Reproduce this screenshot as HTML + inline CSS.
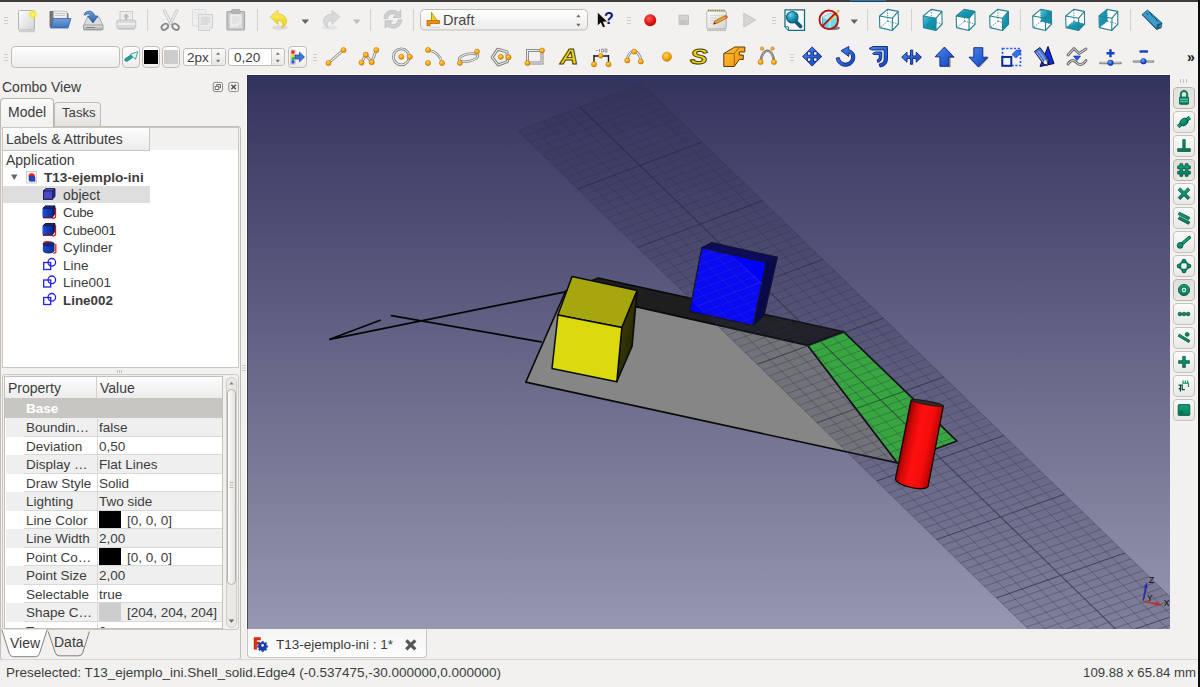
<!DOCTYPE html>
<html>
<head>
<meta charset="utf-8">
<title>FreeCAD</title>
<style>
html,body{margin:0;padding:0;}
body{width:1200px;height:687px;overflow:hidden;background:#f2f1f0;font-family:"Liberation Sans","DejaVu Sans",sans-serif;font-size:13.5px;color:#3c3c3c;position:relative;}
.abs{position:absolute;}
svg{position:absolute;overflow:visible;}
#topbar{left:0;top:0;width:1200px;height:2px;background:#3d3c38;}
#viewport{left:247px;top:75px;width:923px;height:554px;overflow:hidden;}
.t{position:absolute;white-space:nowrap;line-height:16px;}
.b{font-weight:bold;}
.sep{position:absolute;width:1px;background:#d6d3ce;top:9px;height:22px;}
.hdl_unused{position:absolute;width:4px;height:1px;background:#c9c6c1;box-shadow:0 3px 0 #c9c6c1,0 6px 0 #c9c6c1;}
.btn{position:absolute;box-sizing:border-box;border:1px solid #c2beb7;border-radius:4px;background:linear-gradient(#fefefe,#ececea);}
.sbtn{position:absolute;box-sizing:border-box;left:1173px;width:22px;height:22px;border:1px solid #c6c2bb;border-radius:4px;background:linear-gradient(#fbfbfa,#e9e8e6);}
.sbtn.on{background:linear-gradient(#e2e0dd,#eae8e5);border-color:#b9b5ae;}
#tabframe{left:0;top:126px;width:241px;height:534px;border:1px solid #c2beb8;border-radius:0 3px 3px 3px;box-sizing:border-box;background:#f2f1f0;}
#treebox{left:2px;top:127px;width:237px;height:241px;background:#fff;border:1px solid #cbc8c2;box-sizing:border-box;}
#propframe{left:2px;top:374px;width:237px;height:256px;border:1px solid #cbc8c2;border-radius:3px;box-sizing:border-box;}
#treehead{left:3px;top:128px;width:147px;height:23px;background:linear-gradient(#fdfdfd,#ececec);border-right:1px solid #c9c6c1;border-bottom:1px solid #c9c6c1;box-sizing:border-box;}
#treeheadrest{left:150px;top:128px;width:88px;height:22px;background:#f2f1f0;}
#selrow{left:3px;top:186px;width:147px;height:17px;background:#dedede;}
.tab{position:absolute;box-sizing:border-box;border:1px solid #c0bcb5;border-bottom:none;border-radius:4px 4px 0 0;}
#propbox{left:4px;top:376px;width:219px;height:253px;background:#fff;border:1px solid #c4c1bb;box-sizing:border-box;overflow:hidden;}
.prow{position:absolute;left:1px;width:216px;height:18.5px;}
.prow.alt{background:#efefef;}
.prow .k{position:absolute;left:20px;top:1px;line-height:17px;white-space:nowrap;}
.prow .v{position:absolute;left:93px;top:1px;line-height:17px;white-space:nowrap;}
.prow .ln{position:absolute;left:18px;right:0;bottom:0;height:1px;background:#d8d8d8;}
.prow .vl{position:absolute;left:91px;top:0;bottom:0;width:1px;background:#d8d8d8;}
.sw{position:absolute;left:93px;top:0;width:22px;height:17.5px;}
</style>
</head>
<body>
<div id="topbar" class="abs"></div>
<div class="abs" style="left:850px;top:0;width:36px;height:1px;background:#1a7ac8;"></div>
<!-- TOOLBAR 1 -->
<svg width="1200" height="38" style="left:0;top:0" viewBox="0 0 1200 38">
<defs>
<linearGradient id="gpaper" x1="0" y1="0" x2="1" y2="1"><stop offset="0" stop-color="#ffffff"/><stop offset="1" stop-color="#d2d2d2"/></linearGradient>
<radialGradient id="gglow"><stop offset="0" stop-color="#ffffc0"/><stop offset="0.45" stop-color="#f4ea20"/><stop offset="1" stop-color="#f4ea20" stop-opacity="0"/></radialGradient>
<linearGradient id="gfold" x1="0" y1="0" x2="0" y2="1"><stop offset="0" stop-color="#72a2dc"/><stop offset="1" stop-color="#3f73b8"/></linearGradient>
<linearGradient id="gdrv" x1="0" y1="0" x2="0" y2="1"><stop offset="0" stop-color="#e4e4e4"/><stop offset="1" stop-color="#a8a8a8"/></linearGradient>
<linearGradient id="gblu" x1="0" y1="0" x2="0" y2="1"><stop offset="0" stop-color="#6c9ed6"/><stop offset="1" stop-color="#2c5ea0"/></linearGradient>
<linearGradient id="gyel" x1="0" y1="0" x2="0" y2="1"><stop offset="0" stop-color="#fdf27a"/><stop offset="1" stop-color="#e8cc10"/></linearGradient>
<radialGradient id="gred" cx="0.4" cy="0.35" r="0.7"><stop offset="0" stop-color="#ff5a5a"/><stop offset="0.6" stop-color="#e01818"/><stop offset="1" stop-color="#b00c0c"/></radialGradient>
<linearGradient id="gteal" x1="0" y1="0" x2="1" y2="1"><stop offset="0" stop-color="#5cc8ec"/><stop offset="0.45" stop-color="#1596b0"/><stop offset="1" stop-color="#088aa2"/></linearGradient>
<radialGradient id="glens" cx="0.35" cy="0.3" r="0.8"><stop offset="0" stop-color="#6cd0e8"/><stop offset="0.5" stop-color="#1e94b4"/><stop offset="1" stop-color="#0c6c8c"/></radialGradient>
<linearGradient id="gcombo" x1="0" y1="0" x2="0" y2="1"><stop offset="0" stop-color="#ffffff"/><stop offset="1" stop-color="#ebebea"/></linearGradient>
</defs>
<path d="M4 17.5h4M4 20.5h4M4 23.5h4" stroke="#cfcdc9" stroke-width="1"/>
<path d="M19 31.500h16" stroke="#b8b8b8" stroke-width="1.500" opacity="0.6"/><rect x="18.500" y="10.500" width="16" height="19.500" rx="1" fill="url(#gpaper)" stroke="#b4b4b4"/><circle cx="32.800" cy="14.300" r="4.800" fill="url(#gglow)"/>
<path d="M50 11.500h7l1.500 2h9.500v13h-18z" fill="#787878" stroke="#5a5a5a" stroke-width="0.8"/><path d="M53.500 11l13.500 0.500v9h-13.500z" fill="#f0f0f0" stroke="#b0b0b0" stroke-width="0.7"/><path d="M55 13.500h10M55 15.500h10" stroke="#bcbcbc" stroke-width="0.8"/><path d="M53.500 18.500h17.500l-3 9.500h-17.500z" fill="url(#gfold)" stroke="#3465a4" stroke-width="0.8"/>
<path d="M87.500 17h11.500l4 8.500h-19.500z" fill="#dcdcdc" stroke="#9a9a9a" stroke-width="0.8"/><rect x="83.500" y="25" width="19.500" height="5" rx="1" fill="url(#gdrv)" stroke="#8e8e8e" stroke-width="0.8"/><path d="M86 27.500h9" stroke="#888" stroke-width="1"/><path d="M84 14.500c2-4.500 9-5 11 1.500h3l-5 7-5.500-7h3.200c-1-2.600-4.200-2.700-5.200-0.800z" fill="url(#gblu)" stroke="#2a5a9a" stroke-width="0.7"/>
<g opacity="1"><rect x="120" y="11.500" width="12.500" height="10" fill="#ececec" stroke="#c4c4c4" stroke-width="0.8"/><path d="M126.200 13.500l3 3.200h-1.800v3h-2.400v-3h-1.800z" fill="#b8b8b8"/><rect x="116.800" y="20" width="19" height="8.500" rx="2" fill="#dadada" stroke="#bcbcbc" stroke-width="0.8"/><path d="M117.500 24h17.500" stroke="#f4f4f4" stroke-width="1.500"/><path d="M118 29.300h16.500" stroke="#c8c8c8" stroke-width="1"/></g>
<path d="M147.5 9V31" stroke="#d4d1cc" stroke-width="1"/>
<path d="M163 10.300l2.300-0.500 7 14-2 1.200zM178.300 10.300l-2.300-0.500-7 14 2 1.200z" fill="#ececec" stroke="#c2c2c2" stroke-width="0.8"/><ellipse cx="164.800" cy="26.800" rx="3.600" ry="2.600" transform="rotate(-35 164.800 26.800)" fill="none" stroke="#8c8c8c" stroke-width="1.800"/><ellipse cx="175.600" cy="26.800" rx="3.600" ry="2.600" transform="rotate(35 175.600 26.800)" fill="none" stroke="#8c8c8c" stroke-width="1.800"/>
<rect x="192.500" y="9.500" width="13.500" height="16.500" rx="1" fill="#efefef" stroke="#d6d6d6" stroke-width="0.8"/><path d="M194.500 13h8M194.500 15.500h8M194.500 18h8" stroke="#dedede" stroke-width="0.8"/><path d="M198.500 14.500h14v13l-3 3h-11z" fill="#e9e9e9" stroke="#c8c8c8" stroke-width="0.8"/><path d="M201 18h9M201 20h9M201 22h9M201 24h7" stroke="#cfcfcf" stroke-width="1.200"/><path d="M209.500 30.500v-3h3z" fill="#f8f8f8" stroke="#c8c8c8" stroke-width="0.6"/>
<rect x="227" y="11.500" width="17.500" height="18.500" rx="1" fill="#c8c8c8" stroke="#a6a6a6" stroke-width="1.200"/><rect x="229.800" y="14" width="12" height="13.800" fill="#ececec" stroke="#d4d4d4" stroke-width="0.6"/><path d="M232 17h7.500M232 19h7.500M232 21h7.500M232 23h5" stroke="#d6d6d6" stroke-width="1"/><rect x="231.500" y="9.500" width="8.500" height="3.800" rx="1" fill="#b4b4b4" stroke="#9c9c9c" stroke-width="0.6"/><path d="M238.500 27.800v-3h3.300z" fill="#d8d8d8"/>
<path d="M257.5 9V31" stroke="#d4d1cc" stroke-width="1"/>
<ellipse cx="280" cy="27.500" rx="8" ry="2.300" fill="#d8d6d2" opacity="0.8"/><path d="M270.300 16.800l7.600-6.600v3.900c5 0 8.600 2.900 8.600 7 0 3.300-2.300 5.700-5 6.800 1.200-1.400 1.600-2.700 1.300-4.200-0.400-2.200-2.400-3.200-4.900-3.200v3.900z" fill="url(#gyel)" stroke="#d8bc10" stroke-width="0.7"/>
<path d="M301.500 19.500h7.500l-3.750 4.500z" fill="#66635f"/>
<ellipse cx="329.500" cy="27.500" rx="8" ry="2" fill="#e2e0dc" opacity="0.8"/><path d="M339.700 16.800l-7.600-6.600v3.900c-5 0-8.600 2.900-8.600 7 0 3.300 2.300 5.700 5 6.800-1.200-1.400-1.600-2.700-1.300-4.200 0.400-2.200 2.400-3.200 4.900-3.200v3.900z" fill="#d9d9d9" stroke="#c4c4c4" stroke-width="0.7"/>
<path d="M353 19.500h7.500l-3.750 4.500z" fill="#bdbab5"/>
<path d="M370.5 9V31" stroke="#d4d1cc" stroke-width="1"/>
<g fill="#d0d0d0" stroke="#b8b8b8" stroke-width="0.7"><path d="M384 18.500c0-5 4-8.300 8.500-8.300 2.300 0 4.300 0.800 5.800 2.200l2.400-2.200v7.300h-7.600l2.600-2.500c-0.900-0.800-2-1.200-3.300-1.200-2.500 0-4.600 1.800-4.800 4.700z"/><path d="M401.800 19.800c0 5-4 8.300-8.500 8.300-2.300 0-4.300-0.800-5.800-2.200l-2.400 2.200v-7.300h7.600l-2.600 2.500c0.900 0.800 2 1.200 3.300 1.200 2.500 0 4.600-1.800 4.800-4.700z"/></g>
<path d="M413.5 9V31" stroke="#d4d1cc" stroke-width="1"/>
<rect x="420.500" y="9.500" width="167" height="20.500" rx="4" fill="url(#gcombo)" stroke="#c0bcb5"/>
<path d="M431.500 12v10.500M431.500 12.500l7 10h-7z" fill="#f0d020" stroke="#b89000" stroke-width="0.8"/><path d="M427 20.500h12.500v3h-9.500v2.200h-3z" fill="#f09000" stroke="#a85c00" stroke-width="0.7"/><path d="M430 27.500h9.500" stroke="#d8d8d8" stroke-width="1"/>
<path d="M576.200 17.200l2.200-2.600 2.200 2.600zM576.200 23.800l2.200 2.600 2.200-2.600z" fill="#6e6b66"/>
<path d="M597.800 12.800v12.500l3-2.800 2.200 4.800 2-0.900-2.200-4.700 4.200-0.300z" fill="#0c0c0c"/>
<path d="M627 17.5h4M627 20.5h4M627 23.5h4" stroke="#cfcdc9" stroke-width="1"/>
<circle cx="650.200" cy="20.200" r="6" fill="url(#gred)"/>
<rect x="679" y="15.200" width="9.500" height="9.500" fill="#d2d2d2" stroke="#bcbcbc" stroke-width="0.8"/><rect x="680" y="20" width="7.500" height="4" fill="#c4c4c4"/>
<path d="M707 30.300h19" stroke="#b0b0b0" stroke-width="1.600" opacity="0.7"/><rect x="706.800" y="10.800" width="19.500" height="18.200" rx="1.500" fill="url(#gpaper)" stroke="#a4a4a0" stroke-width="0.800"/><path d="M708 10.600h17.500" stroke="#9a8838" stroke-width="2" stroke-dasharray="1.300 0.900"/><path d="M709.500 15.500h14M709.500 18h14M709.500 20.500h8M709.500 23h6" stroke="#d0d0cc" stroke-width="0.800"/><path d="M713.500 24.200l1.300-3.300 10-5.200 1.800 2.600-10 5.200z" fill="#f0a030" stroke="#a05c10" stroke-width="0.700"/><path d="M724.800 15.700l1.700-0.900 1.600 2.600-1.500 0.900z" fill="#e05050"/><path d="M713.500 24.200l1-2.300 1.400 1.800z" fill="#3a3a3a"/>
<path d="M743.800 13.200v13.800l12-6.900z" fill="#d6d6d6" stroke="#bcbcbc" stroke-width="0.8"/>
<path d="M772 17.5h4M772 20.5h4M772 23.5h4" stroke="#cfcdc9" stroke-width="1"/>
<path d="M785 9.800h19.500v20.500h-16l-3.500-3.500z" fill="#fbfbfb" stroke="#176a84" stroke-width="1.300"/><path d="M785 26.800h3.500v3.500" fill="#d0e4ea" stroke="#176a84" stroke-width="0.900"/><path d="M796.300 22.200l4.200 4.200" stroke="#0d5e7a" stroke-width="3.800" stroke-linecap="round"/><circle cx="792.300" cy="17.200" r="5.700" fill="url(#glens)" stroke="#0d5e7a" stroke-width="1.200"/>
<ellipse cx="833" cy="28" rx="7" ry="2" fill="#4a4a4a" opacity="0.700"/><path d="M822.500 17l8-3.500 7 2.500v9.500l-7.500 3.500-7.500-3z" fill="#6cd8e8" stroke="#2a98ac" stroke-width="0.700"/><path d="M822.500 17l7.500 3 7.500-4M830 20v9" stroke="#d8f8fc" stroke-width="0.900" fill="none"/><path d="M822.500 17l8-3.500 7 2.500-7.500 4z" fill="#b8f0f8"/><path d="M830 20.500l8.500-9.500" stroke="#e8c828" stroke-width="2"/><path d="M838 11.500l1-1.200" stroke="#e09030" stroke-width="1.500"/><circle cx="828.800" cy="19.800" r="9.300" fill="none" stroke="#b81414" stroke-width="1.900"/><path d="M822.300 26.400l13-13.200" stroke="#b81414" stroke-width="1.900"/>
<path d="M850.500 19.500h7.500l-3.750 4.500z" fill="#66635f"/>
<path d="M867.5 9V31" stroke="#d4d1cc" stroke-width="1"/>
<path d="M879.5 16.0L887.5 9.4L898.2 11.4L898.4 24.0L892.2 30.5L879.8 27.6Z" fill="#fdfdfd"/><path d="M887.8 21.3L887.5 9.4M887.8 21.3L879.8 27.6M887.8 21.3L898.4 24.0" stroke="#2a7f92" stroke-width="0.8" stroke-dasharray="1.4 1.1" fill="none"/><path d="M879.5 16.0L892.5 18.2L892.2 30.5L879.8 27.6ZM879.5 16.0L887.5 9.4L898.2 11.4L892.5 18.2M898.2 11.4L898.4 24.0L892.2 30.5" stroke="#2a7f92" stroke-width="1.1" fill="none" stroke-linejoin="round"/>
<path d="M911.5 9V31" stroke="#d4d1cc" stroke-width="1"/>
<path d="M923.2 16.0L931.2 9.4L941.9 11.4L942.1 24.0L935.9 30.5L923.5 27.6Z" fill="#fdfdfd"/><path d="M931.5 21.3L931.2 9.4M931.5 21.3L923.5 27.6M931.5 21.3L942.1 24.0" stroke="#2a7f92" stroke-width="0.8" stroke-dasharray="1.4 1.1" fill="none"/><path d="M923.2 16.0L936.2 18.2L935.9 30.5L923.5 27.6Z" fill="url(#gteal)"/><path d="M923.2 16.0L936.2 18.2L935.9 30.5L923.5 27.6ZM923.2 16.0L931.2 9.4L941.9 11.4L936.2 18.2M941.9 11.4L942.1 24.0L935.9 30.5" stroke="#2a7f92" stroke-width="1.1" fill="none" stroke-linejoin="round"/>
<path d="M956.2 16.0L964.2 9.4L974.9 11.4L975.1 24.0L968.9 30.5L956.5 27.6Z" fill="#fdfdfd"/><path d="M964.5 21.3L964.2 9.4M964.5 21.3L956.5 27.6M964.5 21.3L975.1 24.0" stroke="#2a7f92" stroke-width="0.8" stroke-dasharray="1.4 1.1" fill="none"/><path d="M956.2 16.0L964.2 9.4L974.9 11.4L969.2 18.2Z" fill="url(#gteal)"/><path d="M956.2 16.0L969.2 18.2L968.9 30.5L956.5 27.6ZM956.2 16.0L964.2 9.4L974.9 11.4L969.2 18.2M974.9 11.4L975.1 24.0L968.9 30.5" stroke="#2a7f92" stroke-width="1.1" fill="none" stroke-linejoin="round"/>
<path d="M989.7 16.0L997.7 9.4L1008.4 11.4L1008.6 24.0L1002.4 30.5L990.0 27.6Z" fill="#fdfdfd"/><path d="M998.0 21.3L997.7 9.4M998.0 21.3L990.0 27.6M998.0 21.3L1008.6 24.0" stroke="#2a7f92" stroke-width="0.8" stroke-dasharray="1.4 1.1" fill="none"/><path d="M1002.7 18.2L1008.4 11.4L1008.6 24.0L1002.4 30.5Z" fill="url(#gteal)"/><path d="M989.7 16.0L1002.7 18.2L1002.4 30.5L990.0 27.6ZM989.7 16.0L997.7 9.4L1008.4 11.4L1002.7 18.2M1008.4 11.4L1008.6 24.0L1002.4 30.5" stroke="#2a7f92" stroke-width="1.1" fill="none" stroke-linejoin="round"/>
<path d="M1020.5 9V31" stroke="#d4d1cc" stroke-width="1"/>
<path d="M1032.7 16.0L1040.7 9.4L1051.4 11.4L1051.6 24.0L1045.4 30.5L1033.0 27.6Z" fill="#fdfdfd"/><path d="M1040.7 9.4L1051.4 11.4L1051.6 24.0L1041.0 21.3Z" fill="url(#gteal)"/><path d="M1041.0 21.3L1040.7 9.4M1041.0 21.3L1033.0 27.6M1041.0 21.3L1051.6 24.0" stroke="#2a7f92" stroke-width="0.8" stroke-dasharray="1.4 1.1" fill="none"/><path d="M1032.7 16.0L1045.7 18.2L1045.4 30.5L1033.0 27.6ZM1032.7 16.0L1040.7 9.4L1051.4 11.4L1045.7 18.2M1051.4 11.4L1051.6 24.0L1045.4 30.5" stroke="#2a7f92" stroke-width="1.1" fill="none" stroke-linejoin="round"/>
<path d="M1065.7 16.0L1073.7 9.4L1084.4 11.4L1084.6 24.0L1078.4 30.5L1066.0 27.6Z" fill="#fdfdfd"/><path d="M1066.0 27.6L1078.4 30.5L1084.6 24.0L1074.0 21.3Z" fill="url(#gteal)"/><path d="M1074.0 21.3L1073.7 9.4M1074.0 21.3L1066.0 27.6M1074.0 21.3L1084.6 24.0" stroke="#2a7f92" stroke-width="0.8" stroke-dasharray="1.4 1.1" fill="none"/><path d="M1065.7 16.0L1078.7 18.2L1078.4 30.5L1066.0 27.6ZM1065.7 16.0L1073.7 9.4L1084.4 11.4L1078.7 18.2M1084.4 11.4L1084.6 24.0L1078.4 30.5" stroke="#2a7f92" stroke-width="1.1" fill="none" stroke-linejoin="round"/>
<path d="M1099.0 16.0L1107.0 9.4L1117.7 11.4L1117.9 24.0L1111.7 30.5L1099.3 27.6Z" fill="#fdfdfd"/><path d="M1099.0 16.0L1107.0 9.4L1107.3 21.3L1099.3 27.6Z" fill="url(#gteal)"/><path d="M1107.3 21.3L1107.0 9.4M1107.3 21.3L1099.3 27.6M1107.3 21.3L1117.9 24.0" stroke="#2a7f92" stroke-width="0.8" stroke-dasharray="1.4 1.1" fill="none"/><path d="M1099.0 16.0L1112.0 18.2L1111.7 30.5L1099.3 27.6ZM1099.0 16.0L1107.0 9.4L1117.7 11.4L1112.0 18.2M1117.7 11.4L1117.9 24.0L1111.7 30.5" stroke="#2a7f92" stroke-width="1.1" fill="none" stroke-linejoin="round"/>
<path d="M1130.5 9V31" stroke="#d4d1cc" stroke-width="1"/>
<path d="M1142 14.500l5.500-4.500 14.500 13-1 5-4.500 1.500z" fill="#3a9ccc" stroke="#14506c" stroke-width="0.8"/><path d="M1142 14.500l14.500 14 4.500-1.500" fill="none" stroke="#14506c" stroke-width="0.8"/><path d="M1156.500 29.500l0.800-5 4.700-1.500" fill="#1a5878" stroke="#14506c" stroke-width="0.6"/><path d="M1146.500 13.200l1.800 1.800M1149 12l3 3M1151.500 15.200l1.800 1.800M1154 17l3 3M1156.500 20l1.800 1.800" stroke="#0c3c54" stroke-width="0.9"/>
</svg>
<div class="t" style="left:443px;top:11px;font-size:14.5px;line-height:18px;color:#464646;">Draft</div>
<div class="t b" style="left:604px;top:10px;font-size:16px;line-height:18px;color:#141478;">?</div>
<!-- TOOLBAR 2 -->
<div class="btn" style="left:11px;top:46px;width:109px;height:22px;"></div>
<div class="btn" style="left:122px;top:46px;width:18px;height:22px;"></div>
<div class="btn" style="left:142px;top:46px;width:18px;height:22px;"></div>
<div class="btn" style="left:162px;top:46px;width:18px;height:22px;"></div>
<div class="abs" style="left:144px;top:50px;width:14px;height:14px;background:#000;"></div>
<div class="abs" style="left:164px;top:50px;width:14px;height:14px;background:#cccccc;"></div>
<div class="btn" style="left:183px;top:48px;width:43px;height:18px;border-radius:3px;background:#fff;"></div>
<div class="abs" style="left:211px;top:49px;width:14px;height:16px;background:linear-gradient(#fafafa,#e8e7e5);border-left:1px solid #cfccc6;border-radius:0 3px 3px 0;box-sizing:border-box;"></div>
<div class="btn" style="left:228px;top:48px;width:57px;height:18px;border-radius:3px;background:#fff;"></div>
<div class="abs" style="left:271px;top:49px;width:13px;height:16px;background:linear-gradient(#fafafa,#e8e7e5);border-left:1px solid #cfccc6;border-radius:0 3px 3px 0;box-sizing:border-box;"></div>
<div class="t" style="left:187px;top:49px;font-size:13.5px;line-height:17px;">2px</div>
<div class="t" style="left:234px;top:49px;font-size:13.5px;line-height:17px;">0,20</div>
<div class="btn" style="left:288px;top:46px;width:19px;height:22px;"></div>
<div class="t b" style="left:1187px;top:49px;font-size:14px;line-height:16px;color:#1a1a1a;">»</div>
<svg width="1200" height="37" style="left:0;top:38px" viewBox="0 38 1200 37">
<defs>
<radialGradient id="gdot" cx="0.4" cy="0.35" r="0.7"><stop offset="0" stop-color="#ffd860"/><stop offset="0.55" stop-color="#f8a810"/><stop offset="1" stop-color="#d07c00"/></radialGradient>
<linearGradient id="gb" x1="0" y1="0" x2="1" y2="1"><stop offset="0" stop-color="#4a8cf0"/><stop offset="1" stop-color="#1040c0"/></linearGradient>
<linearGradient id="gor" x1="0" y1="0" x2="1" y2="1"><stop offset="0" stop-color="#ffc040"/><stop offset="1" stop-color="#f09000"/></linearGradient>
<radialGradient id="gbdot" cx="0.4" cy="0.35" r="0.7"><stop offset="0" stop-color="#80b0ff"/><stop offset="0.6" stop-color="#1c50e0"/><stop offset="1" stop-color="#0c2c98"/></radialGradient>
</defs>
<path d="M4 54.5h4M4 57.5h4M4 60.5h4" stroke="#cfcdc9" stroke-width="1"/>
<path d="M125.500 58.500l5-3.300 1.800 2.600-5 3.300c-1.800 0.900-3.500-1.400-1.800-2.600z" fill="#18a8a0" stroke="#0a6460" stroke-width="0.7"/><path d="M130.500 54.200l7.300-2.600-2.200 7.400-2.200-1.400z" fill="#d8f4f0" stroke="#2a8a84" stroke-width="0.8"/>
<path d="M216 54.800l2.100-2.600 2.100 2.600zM216 59.800l2.100 2.600 2.100-2.600z" fill="#77746f"/><path d="M275.700 54.800l2.100-2.600 2.100 2.600zM275.700 59.800l2.100 2.600 2.100-2.600z" fill="#77746f"/>
<rect x="291" y="50" width="4" height="14" fill="#fff" stroke="#888" stroke-width="0.5"/><rect x="291.500" y="50.500" width="3" height="3.300" fill="#e02020"/><rect x="291.500" y="53.800" width="3" height="3.300" fill="#f0d020"/><rect x="291.500" y="57.100" width="3" height="3.300" fill="#30c030"/><rect x="291.500" y="60.400" width="3" height="3.100" fill="#3050e0"/><path d="M295 55h4.500v-2.800l5 4.800-5 4.800v-2.800h-4.500z" fill="#3a78e0" stroke="#1a3c98" stroke-width="0.7"/>
<path d="M313 54.5h4M313 57.5h4M313 60.5h4" stroke="#cfcdc9" stroke-width="1"/>
<path d="M328.500 63L343.500 50" stroke="#808080" stroke-width="2.7" fill="none" stroke-linecap="round"/><path d="M328.500 63L343.500 50" stroke="#ececec" stroke-width="1.2" fill="none" stroke-linecap="round"/><circle cx="328.5" cy="63" r="2.6" fill="url(#gdot)" stroke="#c07000" stroke-width="0.5"/><circle cx="343.5" cy="50" r="2.6" fill="url(#gdot)" stroke="#c07000" stroke-width="0.5"/>
<path d="M361.500 62.600L365.800 54.700L371.700 62.200L376.300 50" stroke="#808080" stroke-width="2.7" fill="none" stroke-linecap="round"/><path d="M361.500 62.600L365.800 54.700L371.700 62.200L376.300 50" stroke="#ececec" stroke-width="1.2" fill="none" stroke-linecap="round"/><circle cx="361.5" cy="62.6" r="2.6" fill="url(#gdot)" stroke="#c07000" stroke-width="0.5"/><circle cx="365.8" cy="54.7" r="2.6" fill="url(#gdot)" stroke="#c07000" stroke-width="0.5"/><circle cx="371.7" cy="62.2" r="2.6" fill="url(#gdot)" stroke="#c07000" stroke-width="0.5"/><circle cx="376.3" cy="50" r="2.6" fill="url(#gdot)" stroke="#c07000" stroke-width="0.5"/>
<circle cx="401.300" cy="56.800" r="8" stroke="#8a8a8a" stroke-width="2.800" fill="none"/><circle cx="401.300" cy="56.800" r="8" stroke="#ececec" stroke-width="1.100" fill="none"/><circle cx="401.3" cy="56.8" r="2.6" fill="url(#gdot)" stroke="#c07000" stroke-width="0.5"/><circle cx="409.8" cy="56.8" r="2.6" fill="url(#gdot)" stroke="#c07000" stroke-width="0.5"/>
<path d="M428 50Q440 52 442 63" stroke="#808080" stroke-width="2.7" fill="none" stroke-linecap="round"/><path d="M428 50Q440 52 442 63" stroke="#ececec" stroke-width="1.2" fill="none" stroke-linecap="round"/><circle cx="428" cy="50" r="2.6" fill="url(#gdot)" stroke="#c07000" stroke-width="0.5"/><circle cx="428" cy="63" r="2.6" fill="url(#gdot)" stroke="#c07000" stroke-width="0.5"/><circle cx="442" cy="63" r="2.6" fill="url(#gdot)" stroke="#c07000" stroke-width="0.5"/>
<ellipse cx="468.500" cy="57.600" rx="9.600" ry="3.700" transform="rotate(-12 468.500 57.600)" stroke="#8a8a8a" stroke-width="2.600" fill="none"/><ellipse cx="468.500" cy="57.600" rx="9.600" ry="3.700" transform="rotate(-12 468.500 57.600)" stroke="#ececec" stroke-width="1" fill="none"/><circle cx="477" cy="51.6" r="2.5" fill="url(#gdot)" stroke="#c07000" stroke-width="0.5"/><circle cx="459.8" cy="63" r="2.5" fill="url(#gdot)" stroke="#c07000" stroke-width="0.5"/>
<path d="M497.7 49.2L507.0 51.9L507.4 61.6L498.2 65.0L492.2 57.3Z" stroke="#7e7e7e" stroke-width="3" fill="none" stroke-linejoin="round"/><path d="M497.7 49.2L507.0 51.9L507.4 61.6L498.2 65.0L492.2 57.3Z" stroke="#ececec" stroke-width="1.100" fill="none" stroke-linejoin="round"/><circle cx="500.8" cy="56.8" r="2.6" fill="url(#gdot)" stroke="#c07000" stroke-width="0.5"/><circle cx="508.5" cy="57.2" r="2.6" fill="url(#gdot)" stroke="#c07000" stroke-width="0.5"/>
<rect x="527.500" y="50.500" width="14.500" height="12.500" stroke="#8a8a8a" stroke-width="3" fill="none"/><rect x="527.500" y="50.500" width="14.500" height="12.500" stroke="#ececec" stroke-width="1.100" fill="none"/><circle cx="527.5" cy="63" r="2.6" fill="url(#gdot)" stroke="#c07000" stroke-width="0.5"/><circle cx="542" cy="50.5" r="2.6" fill="url(#gdot)" stroke="#c07000" stroke-width="0.5"/>
<path d="M594 55v9M608.500 55v9M594 56h14.500" stroke="#1a1a1a" stroke-width="1.400" fill="none"/><path d="M596 50.500h2M599.500 49v3M601.500 49h2v3h-2zM605 49h2v3h-2z" stroke="#777" stroke-width="0.7" fill="none"/><circle cx="594" cy="64.3" r="2.6" fill="url(#gdot)" stroke="#c07000" stroke-width="0.5"/><circle cx="608.5" cy="64.3" r="2.6" fill="url(#gdot)" stroke="#c07000" stroke-width="0.5"/><circle cx="600.8" cy="55.8" r="2.4" fill="url(#gdot)" stroke="#c07000" stroke-width="0.5"/>
<path d="M627.300 60.500C628 48 640 48 640.800 61.500" stroke="#808080" stroke-width="2.7" fill="none" stroke-linecap="round"/><path d="M627.300 60.500C628 48 640 48 640.800 61.500" stroke="#ececec" stroke-width="1.2" fill="none" stroke-linecap="round"/><circle cx="627.3" cy="60.5" r="2.6" fill="url(#gdot)" stroke="#c07000" stroke-width="0.5"/><circle cx="634.2" cy="51.6" r="2.6" fill="url(#gdot)" stroke="#c07000" stroke-width="0.5"/><circle cx="640.8" cy="61.5" r="2.6" fill="url(#gdot)" stroke="#c07000" stroke-width="0.5"/>
<circle cx="666.9" cy="56.8" r="4.6" fill="url(#gdot)" stroke="#c07000" stroke-width="0.5"/>
<path d="M723.800 53.500l11-6.500h10v5h-5.500v3h4v4.500h-4l-5 7h-10.500z" fill="url(#gor)" stroke="#5a3c00" stroke-width="1"/><path d="M723.800 53.500h10.500l0 13M734.300 53.500l5.200-6.300" stroke="#8a5800" stroke-width="0.8" fill="none"/>
<path d="M760.600 62C762 47 773 47 774 62" stroke="#808080" stroke-width="2.7" fill="none" stroke-linecap="round"/><path d="M760.600 62C762 47 773 47 774 62" stroke="#ececec" stroke-width="1.2" fill="none" stroke-linecap="round"/><path d="M760.600 62C762 47 773 47 774 62" stroke="#222" stroke-width="0.6" fill="none"/><circle cx="760.6" cy="62" r="2.6" fill="url(#gdot)" stroke="#c07000" stroke-width="0.5"/><circle cx="774" cy="62" r="2.6" fill="url(#gdot)" stroke="#c07000" stroke-width="0.5"/><circle cx="762" cy="48.5" r="1.7" fill="url(#gdot)" stroke="#c07000" stroke-width="0.5"/><circle cx="772.5" cy="48.5" r="1.7" fill="url(#gdot)" stroke="#c07000" stroke-width="0.5"/>
<path d="M790 54.5h4M790 57.5h4M790 60.5h4" stroke="#cfcdc9" stroke-width="1"/>
<path d="M812.2 46.9l4.600 4.800h-3.300v3.500h3.500v-3.300l4.800 4.600-4.800 4.600v-3.300h-3.500v3.500h3.300l-4.600 4.800-4.600-4.800h3.300v-3.500h-3.500v3.300l-4.800-4.600 4.800-4.600v3.300h3.500v-3.500h-3.300z" fill="url(#gb)" stroke="#0a2478" stroke-width="0.9" stroke-linejoin="round"/>
<path d="M841 50.700l7.800-4.200v3.300c4.300 0.900 6.200 4.300 6 7.900-0.300 4.800-4.200 8.600-9.300 8.600-4.900 0-8.700-3.500-9.300-8.200l3.100-0.500c0.500 3.100 3 5.500 6.200 5.500 3.400 0 6-2.600 6.100-5.800 0.100-2.300-1-3.800-2.800-4.300v3.400z" fill="url(#gb)" stroke="#0a2478" stroke-width="0.9" stroke-linejoin="round"/>
<path d="M869 48.500l4-2h14.500v12c0 5.500-3.300 8-7.500 8.500l-0.800-3c2.800-0.500 5-2 5-5.500v-8.500h-12.500z" fill="url(#gb)" stroke="#0a2478" stroke-width="0.9" stroke-linejoin="round"/><path d="M872.500 53.500l3-1.500h6.200v5.500c0 3-1.500 4.500-4 4.800l-0.500-2.500c1.200-0.300 2-1 2-2.600v-2.700h-5.500z" fill="url(#gb)" stroke="#0a2478" stroke-width="0.9" stroke-linejoin="round"/>
<path d="M901.700 57.200l5.300-5v3.700h3.500v-5.800h2.200v5.800h3.500v-3.700l5.300 5-5.300 5v-3.700h-3.500v5.800h-2.200v-5.800h-3.500v3.700z" fill="url(#gb)" stroke="#0a2478" stroke-width="0.9" stroke-linejoin="round"/>
<path d="M944.400 47l9.300 9.800h-4.800v9.500h-9v-9.500h-4.800z" fill="url(#gb)" stroke="#0a2478" stroke-width="0.900" stroke-linejoin="round"/><path d="M949 66.800h1l0-9.500h4.500" stroke="#222" stroke-width="1" fill="none" opacity="0.6"/>
<path d="M978.300 67l9.300-9.800h-4.800v-9.500h-9v9.500h-4.800z" fill="url(#gb)" stroke="#0a2478" stroke-width="0.900" stroke-linejoin="round"/><path d="M979.300 67.300l9-9.600" stroke="#222" stroke-width="1" fill="none" opacity="0.6"/>
<rect x="1002.500" y="48.500" width="18" height="17" fill="none" stroke="#2060f0" stroke-width="1.600" stroke-dasharray="2.200 1.600"/><rect x="1002.300" y="57" width="9" height="8.800" fill="#f4f4f4" stroke="#0c2c98" stroke-width="2"/><path d="M1012 54.500l4.500-4.500 3.500 0.500 0.500 3-4.500 4.500z" fill="#3a70e8" stroke="#0c2c98" stroke-width="0.6"/>
<path d="M1040 66.500l8-20 6 17z" fill="#1030e0" stroke="#0a0a30" stroke-width="1"/><path d="M1034.500 51.500l5.500-4 9 12.500-1 5-4.500-1z" fill="#4a78d8" stroke="#0a0a30" stroke-width="0.9"/><path d="M1043.500 64l-0.300-3.200 3.300-2.300 1.500 6.500z" fill="#f0f0f0" stroke="#0a0a30" stroke-width="0.7"/><path d="M1036.500 52.500l8 11M1038.500 51l8 11" stroke="#b8ccf4" stroke-width="0.8"/>
<path d="M1068 55l6-6.500 5 5 7-4.500" stroke="#6a6a6a" stroke-width="2.800" fill="none" stroke-linejoin="round" stroke-linecap="round"/><path d="M1068 55l6-6.500 5 5 7-4.500" stroke="#ececec" stroke-width="1" fill="none" stroke-linejoin="round" stroke-linecap="round"/><path d="M1068 64c4-6 7-3 9-1s5 3 9-2.500" stroke="#6a6a6a" stroke-width="2.800" fill="none" stroke-linecap="round"/><path d="M1068 64c4-6 7-3 9-1s5 3 9-2.500" stroke="#ececec" stroke-width="1" fill="none" stroke-linecap="round"/><path d="M1073.500 56h7l-3.500 4.500z" fill="#2458e0" stroke="#0c2c98" stroke-width="0.6"/>
<path d="M1100.500 63h20" stroke="#8a8a8a" stroke-width="2.600" stroke-linecap="round"/><path d="M1100.500 62.600h20" stroke="#d8d8d8" stroke-width="0.800"/><circle cx="1110.500" cy="62.800" r="2.800" fill="url(#gbdot)" stroke="#0c2c98" stroke-width="0.5"/><path d="M1106.500 53.300h8M1110.500 49.300v8" stroke="#1440d0" stroke-width="2.400"/>
<path d="M1134 61.500h19" stroke="#8a8a8a" stroke-width="2.600" stroke-linecap="round"/><path d="M1134 61.100h19" stroke="#d8d8d8" stroke-width="0.800"/><circle cx="1143.500" cy="61.300" r="2.800" fill="url(#gbdot)" stroke="#0c2c98" stroke-width="0.5"/><path d="M1139.500 51.500h8.500" stroke="#1440d0" stroke-width="2.400"/>
</svg>
<div class="t b" style="left:560px;top:45px;font-size:22px;line-height:24px;font-style:italic;color:#f0d818;-webkit-text-stroke:0.9px #4a3c00;transform:scaleX(1.15);transform-origin:left;">A</div>
<div class="t b" style="left:690px;top:45px;font-size:22px;line-height:24px;font-style:italic;color:#f0d818;-webkit-text-stroke:0.9px #4a3c00;transform:scaleX(1.2);transform-origin:left;">S</div>
<!-- LEFT PANEL -->
<div class="t" style="left:2px;top:79px;font-size:14px;">Combo View</div>
<svg width="30" height="12" style="left:212px;top:81px" viewBox="212 81 30 12">
<rect x="213.300" y="82.400" width="9.200" height="9.200" rx="1.800" fill="#f6f6f5" stroke="#7e7b76" stroke-width="0.900"/>
<rect x="216.700" y="84.600" width="3.800" height="3.200" fill="none" stroke="#66635e" stroke-width="0.900"/><rect x="215.200" y="86.300" width="3.600" height="3.200" fill="#fdfdfd" stroke="#66635e" stroke-width="0.900"/>
<rect x="228.800" y="82.400" width="9.600" height="9.200" rx="1.800" fill="#f6f6f5" stroke="#7e7b76" stroke-width="0.900"/>
<path d="M231.300 84.700l4.600 4.600M235.900 84.700l-4.600 4.600" stroke="#55524e" stroke-width="1.500"/>
</svg>
<div id="tabframe" class="abs"></div>
<div class="tab" style="left:54px;top:102px;width:47px;height:24px;background:linear-gradient(#f4f3f2,#e6e4e1);"></div>
<div class="tab" style="left:0px;top:98px;width:54px;height:29px;background:linear-gradient(#fafafa,#f2f1f0);border-color:#b9b5af;"></div>
<div class="t" style="left:8px;top:104px;font-size:14px;">Model</div>
<div class="t" style="left:62px;top:105px;font-size:13.2px;">Tasks</div>
<div id="treebox" class="abs"></div>
<div id="propframe" class="abs"></div>
<div id="treehead" class="abs"></div>
<div id="treeheadrest" class="abs"></div>
<div class="t" style="left:6px;top:131px;font-size:14px;">Labels &amp; Attributes</div>
<div id="selrow" class="abs"></div>
<div class="t" style="left:6px;top:152px;font-size:14px;">Application</div>
<div class="t b" style="left:44px;top:170px;font-size:13.6px;">T13-ejemplo-ini</div>
<div class="t" style="left:63px;top:187px;font-size:13.9px;">object</div>
<div class="t" style="left:63px;top:205px;font-size:13.3px;letter-spacing:-0.4px;">Cube</div>
<div class="t" style="left:63px;top:223px;font-size:13.3px;letter-spacing:-0.2px;">Cube001</div>
<div class="t" style="left:63px;top:240px;font-size:13.5px;">Cylinder</div>
<div class="t" style="left:63px;top:258px;font-size:13.5px;">Line</div>
<div class="t" style="left:63px;top:275px;font-size:13.5px;">Line001</div>
<div class="t b" style="left:63px;top:293px;font-size:13.4px;">Line002</div>
<!-- TREE ICONS -->
<svg width="70" height="140" style="left:0;top:165px" viewBox="0 165 70 140">
<defs><linearGradient id="gcb" x1="0" y1="0" x2="1" y2="0"><stop offset="0" stop-color="#1a4cd8"/><stop offset="1" stop-color="#0c2c98"/></linearGradient></defs>
<path d="M11 174.500h6.500l-3.250 5.500z" fill="#6a6762"/>
<rect x="26.500" y="171.500" width="10" height="11.500" fill="#f6f6f6" stroke="#c4c4c4" stroke-width="0.8"/><path d="M28.500 176.500a3.200 3.200 0 0 1 6.400 0v1z" fill="#e02020"/><path d="M29 176.500h5l1 0.800v4h-5l-1-0.800z" fill="#2048c8" stroke="#102a80" stroke-width="0.5"/>
<path d="M43.500 190.79999999999998l2.500-2h9l0 7.500-2.500 3h-9z" fill="#2a2a8a" stroke="#16164a" stroke-width="0.9" stroke-linejoin="round"/><path d="M43.500 190.79999999999998h9v8.500h-9z" fill="#4a4ac8" stroke="#16164a" stroke-width="0.8"/><path d="M43.500 190.79999999999998l2.500-2h9l-2.500 2z" fill="#5a5ad8" stroke="#16164a" stroke-width="0.7"/>
<path d="M55.500 207.8v9.500l-3 1.500M43 217.8h10" stroke="#e02020" stroke-width="1.300" fill="none"/><path d="M43 208.3l2.500-2.300h9.500l-0.300 8-2.200 3.300h-9.500z" fill="#0c1c60" stroke="#0a1440" stroke-width="0.8" stroke-linejoin="round"/><path d="M43 208.3h9.500v8.800h-9.500z" fill="url(#gcb)"/><path d="M43 208.3l2.500-2.300h9.500l-2.500 2.300z" fill="#1a2a78" stroke="#0a1440" stroke-width="0.6"/>
<path d="M55.500 225.3v9.500l-3 1.500M43 235.3h10" stroke="#e02020" stroke-width="1.300" fill="none"/><path d="M43 225.8l2.500-2.300h9.500l-0.300 8-2.200 3.300h-9.500z" fill="#0c1c60" stroke="#0a1440" stroke-width="0.8" stroke-linejoin="round"/><path d="M43 225.8h9.500v8.800h-9.500z" fill="url(#gcb)"/><path d="M43 225.8l2.500-2.300h9.500l-2.500 2.300z" fill="#1a2a78" stroke="#0a1440" stroke-width="0.6"/>
<path d="M55.800 244v8.500l-2.500 0.800" stroke="#e02020" stroke-width="1.300" fill="none"/><path d="M43.300 243.8v7a5.400 2.300 0 0 0 10.800 0v-7z" fill="url(#gcb)" stroke="#0a1440" stroke-width="0.7"/><ellipse cx="48.700" cy="243.8" rx="5.400" ry="2.100" fill="#1a2a78" stroke="#0a1440" stroke-width="0.6"/><path d="M43.500 242.5a5.400 2.100 0 0 1 6-0.700" stroke="#e02020" stroke-width="1.200" fill="none"/>
<rect x="43.700" y="262.5" width="7" height="7" fill="none" stroke="#2222e8" stroke-width="1.300"/><circle cx="51.800" cy="262.3" r="3.800" fill="none" stroke="#2222e8" stroke-width="1.300"/>
<rect x="43.700" y="280.0" width="7" height="7" fill="none" stroke="#2222e8" stroke-width="1.300"/><circle cx="51.800" cy="279.8" r="3.800" fill="none" stroke="#2222e8" stroke-width="1.300"/>
<rect x="43.700" y="297.5" width="7" height="7" fill="none" stroke="#2222e8" stroke-width="1.300"/><circle cx="51.800" cy="297.3" r="3.800" fill="none" stroke="#2222e8" stroke-width="1.300"/>
</svg>
<!-- PROPERTY -->
<div id="propbox" class="abs">
<div class="abs" style="left:0;top:0;width:217px;height:22px;background:linear-gradient(#fdfdfd,#ececec);border-bottom:1px solid #c9c6c1;box-sizing:border-box;"></div>
<div class="abs" style="left:91px;top:0;width:1px;height:22px;background:#d4d1cc;"></div>
<div class="t" style="left:3px;top:3px;font-size:14px;">Property</div><div class="t" style="left:95px;top:3px;font-size:14px;">Value</div>
<div class="abs" style="left:0;top:22px;width:217px;height:19px;background:#c8c6c3;"></div>
<div class="t b" style="left:21px;top:24px;color:#fff;">Base</div>
<div class="prow alt" style="top:41.0px"><div class="ln"></div><div class="vl"></div><div class="k">Boundin…</div><div class="v">false</div></div>
<div class="prow" style="top:59.5px"><div class="ln"></div><div class="vl"></div><div class="k">Deviation</div><div class="v">0,50</div></div>
<div class="prow alt" style="top:78.0px"><div class="ln"></div><div class="vl"></div><div class="k">Display …</div><div class="v">Flat Lines</div></div>
<div class="prow" style="top:96.5px"><div class="ln"></div><div class="vl"></div><div class="k">Draw Style</div><div class="v">Solid</div></div>
<div class="prow alt" style="top:115.0px"><div class="ln"></div><div class="vl"></div><div class="k">Lighting</div><div class="v">Two side</div></div>
<div class="prow" style="top:133.5px"><div class="ln"></div><div class="vl"></div><div class="k">Line Color</div><div class="sw" style="background:#000"></div><div class="v" style="left:121px">[0, 0, 0]</div></div>
<div class="prow alt" style="top:152.0px"><div class="ln"></div><div class="vl"></div><div class="k">Line Width</div><div class="v">2,00</div></div>
<div class="prow" style="top:170.5px"><div class="ln"></div><div class="vl"></div><div class="k">Point Co…</div><div class="sw" style="background:#000"></div><div class="v" style="left:121px">[0, 0, 0]</div></div>
<div class="prow alt" style="top:189.0px"><div class="ln"></div><div class="vl"></div><div class="k">Point Size</div><div class="v">2,00</div></div>
<div class="prow" style="top:207.5px"><div class="ln"></div><div class="vl"></div><div class="k">Selectable</div><div class="v">true</div></div>
<div class="prow alt" style="top:226.0px"><div class="ln"></div><div class="vl"></div><div class="k">Shape C…</div><div class="sw" style="background:#cccccc"></div><div class="v" style="left:121px">[204, 204, 204]</div></div>
<div class="prow" style="top:244.5px"><div class="ln"></div><div class="vl"></div><div class="k">T</div><div class="v">0</div></div>
</div>
<div class="abs" style="left:226px;top:377px;width:11px;height:251px;border:1px solid #cfccc6;border-radius:6px;box-sizing:border-box;background:#ebe9e6;"></div>
<div class="abs" style="left:227px;top:389px;width:9px;height:196px;border:1px solid #b5b1aa;border-radius:5px;box-sizing:border-box;background:linear-gradient(90deg,#fdfdfd,#e4e2df);"></div>
<svg width="12" height="252" style="left:226px;top:376px" viewBox="226 376 12 252"><path d="M229.200 384.500l2.300-2.800 2.300 2.800z" fill="#8a8782"/><path d="M228.700 619.500l2.800 3.300 2.800-3.300z" fill="#6a6762"/><path d="M229.500 482.500h4M229.500 485h4M229.500 487.500h4" stroke="#bdbab4" stroke-width="1"/></svg>
<div class="abs" style="left:117px;top:370px;width:1px;height:3px;background:#c4c1bb;box-shadow:2px 0 0 #c4c1bb,4px 0 0 #c4c1bb;"></div>
<div class="abs" style="left:242px;top:365px;width:4px;height:1px;background:#cfccc7;box-shadow:0 2.5px 0 #cfccc7,0 5px 0 #cfccc7;"></div>
<svg width="120" height="30" style="left:0;top:628px" viewBox="0 628 120 30"><path d="M1.800 629.500 L9.300 653.500 Q10.300 656.700 13.500 656.700 L35.500 656.700 Q38.500 656.700 39.500 653.500 L47.200 629.500" fill="#ffffff" stroke="#84817c" stroke-width="1"/><path d="M48.200 631.500 L55.300 652.800 Q56.300 655.800 59.300 655.800 L78.700 655.800 Q81.700 655.800 82.700 652.800 L89.400 631.500" fill="#f0efed" stroke="#84817c" stroke-width="1"/></svg>
<div class="t" style="left:10px;top:635px;font-size:14px;">View</div><div class="t" style="left:54px;top:634px;font-size:14px;">Data</div>
<div class="abs" style="left:246px;top:74px;width:924px;height:555px;background:#fdfdfd;"></div>
<div id="viewport" class="abs">
<svg width="923" height="554" viewBox="247 75 923 554" style="left:0;top:0">
<defs>
<linearGradient id="bg" x1="0" y1="0" x2="0" y2="1"><stop offset="0" stop-color="#33335f"/><stop offset="1" stop-color="#9797af"/></linearGradient>
<linearGradient id="cyl" gradientUnits="userSpaceOnUse" x1="903" y1="438" x2="936" y2="445"><stop offset="0" stop-color="#860000"/><stop offset="0.18" stop-color="#d40808"/><stop offset="0.42" stop-color="#ff1010"/><stop offset="0.75" stop-color="#f40c0c"/><stop offset="1" stop-color="#b40404"/></linearGradient>
<linearGradient id="yside" gradientUnits="userSpaceOnUse" x1="622" y1="330" x2="636" y2="333"><stop offset="0" stop-color="#383808"/><stop offset="1" stop-color="#262604"/></linearGradient>
<clipPath id="cpblue"><polygon points="701.8,247.9 766.2,262.3 753.1,325.4 689.8,311.2"/></clipPath>
<clipPath id="cphalf"><polygon points="680,210.3 800,315.2 800,400 600,400 600,210.3"/></clipPath>
</defs>
<rect x="247" y="75" width="923" height="554" fill="url(#bg)"/>
<path d="M247.500 629V75.500H1170" stroke="#23235a" stroke-width="1" fill="none" opacity="0.7"/>
<polygon points="565.7,291.0 598.3,278.0 843.7,331.8 807.8,345.4" fill="#1e1e1e" stroke="#0a0a0a" stroke-width="1.6" stroke-linejoin="round"/>
<polygon points="525.8,382.1 565.7,291.0 807.8,345.4 897.5,462.9" fill="#868686" stroke="#0a0a0a" stroke-width="1.6" stroke-linejoin="round"/>
<polygon points="807.8,345.4 843.7,331.8 957.0,441.1 897.5,462.9" fill="#3cc83c" stroke="#0a0a0a" stroke-width="1.6" stroke-linejoin="round"/>
<polygon points="518.0,130.7 641.7,83.4 1366.5,787.8 1235.6,831.5" fill="#2d2d4e" fill-opacity="0.22"/><path d="M518.0 130.7L1235.6 831.5M530.4 126.0L1248.7 827.1M542.7 121.2L1261.8 822.8M555.1 116.5L1274.9 818.4M567.5 111.8L1288.0 814.0M592.2 102.3L1314.1 805.3M604.6 97.6L1327.2 800.9M617.0 92.9L1340.3 796.5M629.3 88.1L1353.4 792.2M641.7 83.4L1366.5 787.8M518.0 130.7L641.7 83.4M524.0 136.5L647.7 89.3M530.0 142.4L653.8 95.1M535.9 148.2L659.8 101.0M541.9 154.1L665.9 106.9M547.9 159.9L671.9 112.8M553.9 165.7L677.9 118.6M559.9 171.6L684.0 124.5M565.8 177.4L690.0 130.4M571.8 183.3L696.1 136.2M583.8 194.9L708.1 148.0M589.8 200.8L714.2 153.8M595.7 206.6L720.2 159.7M601.7 212.5L726.3 165.6M607.7 218.3L732.3 171.4M613.7 224.1L738.3 177.3M619.7 230.0L744.4 183.2M625.6 235.8L750.4 189.1M631.6 241.7L756.5 194.9M643.6 253.3L768.5 206.7M649.6 259.2L774.6 212.5M655.5 265.0L780.6 218.4M661.5 270.9L786.7 224.3M667.5 276.7L792.7 230.1M673.5 282.5L798.7 236.0M679.5 288.4L804.8 241.9M685.4 294.2L810.8 247.8M691.4 300.1L816.9 253.6M703.4 311.7L828.9 265.4M709.4 317.6L835.0 271.2M715.3 323.4L841.0 277.1M721.3 329.3L847.1 283.0M727.3 335.1L853.1 288.9M733.3 340.9L859.1 294.7M739.3 346.8L865.2 300.6M745.2 352.6L871.2 306.5M751.2 358.5L877.3 312.3M763.2 370.1L889.3 324.1M769.2 376.0L895.4 329.9M775.1 381.8L901.4 335.8M781.1 387.7L907.5 341.7M787.1 393.5L913.5 347.6M793.1 399.3L919.5 353.4M799.1 405.2L925.6 359.3M805.0 411.0L931.6 365.2M811.0 416.9L937.7 371.0M823.0 428.5L949.7 382.8M829.0 434.4L955.8 388.6M834.9 440.2L961.8 394.5M840.9 446.1L967.9 400.4M846.9 451.9L973.9 406.2M852.9 457.7L979.9 412.1M858.9 463.6L986.0 418.0M864.8 469.4L992.0 423.9M870.8 475.3L998.1 429.7M882.8 486.9L1010.1 441.5M888.8 492.8L1016.2 447.3M894.7 498.6L1022.2 453.2M900.7 504.5L1028.3 459.1M906.7 510.3L1034.3 464.9M912.7 516.1L1040.3 470.8M918.7 522.0L1046.4 476.7M924.6 527.8L1052.4 482.6M930.6 533.7L1058.5 488.4M942.6 545.3L1070.5 500.2M948.6 551.2L1076.6 506.0M954.5 557.0L1082.6 511.9M960.5 562.9L1088.7 517.8M966.5 568.7L1094.7 523.6M972.5 574.5L1100.7 529.5M978.5 580.4L1106.8 535.4M984.4 586.2L1112.8 541.3M990.4 592.1L1118.9 547.1M1002.4 603.7L1130.9 558.9M1008.4 609.6L1137.0 564.7M1014.3 615.4L1143.0 570.6M1020.3 621.3L1149.1 576.5M1026.3 627.1L1155.1 582.4M1032.3 632.9L1161.1 588.2M1038.3 638.8L1167.2 594.1M1044.2 644.6L1173.2 600.0M1050.2 650.5L1179.3 605.8M1062.2 662.1L1191.3 617.6M1068.2 668.0L1197.4 623.4M1074.1 673.8L1203.4 629.3M1080.1 679.7L1209.5 635.2M1086.1 685.5L1215.5 641.0M1092.1 691.3L1221.5 646.9M1098.1 697.2L1227.6 652.8M1104.0 703.0L1233.6 658.7M1110.0 708.9L1239.7 664.5M1122.0 720.5L1251.7 676.3M1128.0 726.4L1257.8 682.1M1133.9 732.2L1263.8 688.0M1139.9 738.1L1269.9 693.9M1145.9 743.9L1275.9 699.8M1151.9 749.7L1281.9 705.6M1157.9 755.6L1288.0 711.5M1163.8 761.4L1294.0 717.4M1169.8 767.3L1300.1 723.2M1181.8 778.9L1312.1 735.0M1187.8 784.8L1318.2 740.8M1193.7 790.6L1324.2 746.7M1199.7 796.5L1330.3 752.6M1205.7 802.3L1336.3 758.5M1211.7 808.1L1342.3 764.3M1217.7 814.0L1348.4 770.2M1223.6 819.8L1354.4 776.1M1229.6 825.7L1360.5 781.9" fill="none" stroke="#2e2e50" stroke-opacity="0.36" stroke-width="1"/><path d="M579.9 107.0L1301.0 809.6M577.8 189.1L702.1 142.1M637.6 247.5L762.5 200.8M697.4 305.9L822.9 259.5M757.2 364.3L883.3 318.2M817.0 422.7L943.7 376.9M876.8 481.1L1004.1 435.6M936.6 539.5L1064.5 494.3M996.4 597.9L1124.9 553.0M1056.2 656.3L1185.3 611.7M1116.0 714.7L1245.7 670.4M1175.8 773.1L1306.1 729.1M1235.6 831.5L1366.5 787.8" fill="none" stroke="#242440" stroke-opacity="0.6" stroke-width="1.1"/>
<polygon points="701.8,247.9 711.7,242.7 777.2,257.3 766.2,262.3" fill="#0c0c58" stroke="#10103a" stroke-width="1.4" stroke-linejoin="round"/>
<polygon points="766.2,262.3 777.2,257.3 764.0,315.2 753.1,325.4" fill="#08084a" stroke="#10103a" stroke-width="1.4" stroke-linejoin="round"/>
<polygon points="701.8,247.9 766.2,262.3 753.1,325.4 689.8,311.2" fill="#0000ff" stroke="#10103a" stroke-width="1.4" stroke-linejoin="round"/>
<g clip-path="url(#cpblue)"><g clip-path="url(#cphalf)">
<polygon points="518.0,130.7 641.7,83.4 1366.5,787.8 1235.6,831.5" fill="#5a5a90" fill-opacity="0.10"/><path d="M518.0 130.7L1235.6 831.5M530.4 126.0L1248.7 827.1M542.7 121.2L1261.8 822.8M555.1 116.5L1274.9 818.4M567.5 111.8L1288.0 814.0M592.2 102.3L1314.1 805.3M604.6 97.6L1327.2 800.9M617.0 92.9L1340.3 796.5M629.3 88.1L1353.4 792.2M641.7 83.4L1366.5 787.8M518.0 130.7L641.7 83.4M524.0 136.5L647.7 89.3M530.0 142.4L653.8 95.1M535.9 148.2L659.8 101.0M541.9 154.1L665.9 106.9M547.9 159.9L671.9 112.8M553.9 165.7L677.9 118.6M559.9 171.6L684.0 124.5M565.8 177.4L690.0 130.4M571.8 183.3L696.1 136.2M583.8 194.9L708.1 148.0M589.8 200.8L714.2 153.8M595.7 206.6L720.2 159.7M601.7 212.5L726.3 165.6M607.7 218.3L732.3 171.4M613.7 224.1L738.3 177.3M619.7 230.0L744.4 183.2M625.6 235.8L750.4 189.1M631.6 241.7L756.5 194.9M643.6 253.3L768.5 206.7M649.6 259.2L774.6 212.5M655.5 265.0L780.6 218.4M661.5 270.9L786.7 224.3M667.5 276.7L792.7 230.1M673.5 282.5L798.7 236.0M679.5 288.4L804.8 241.9M685.4 294.2L810.8 247.8M691.4 300.1L816.9 253.6M703.4 311.7L828.9 265.4M709.4 317.6L835.0 271.2M715.3 323.4L841.0 277.1M721.3 329.3L847.1 283.0M727.3 335.1L853.1 288.9M733.3 340.9L859.1 294.7M739.3 346.8L865.2 300.6M745.2 352.6L871.2 306.5M751.2 358.5L877.3 312.3M763.2 370.1L889.3 324.1M769.2 376.0L895.4 329.9M775.1 381.8L901.4 335.8M781.1 387.7L907.5 341.7M787.1 393.5L913.5 347.6M793.1 399.3L919.5 353.4M799.1 405.2L925.6 359.3M805.0 411.0L931.6 365.2M811.0 416.9L937.7 371.0M823.0 428.5L949.7 382.8M829.0 434.4L955.8 388.6M834.9 440.2L961.8 394.5M840.9 446.1L967.9 400.4M846.9 451.9L973.9 406.2M852.9 457.7L979.9 412.1M858.9 463.6L986.0 418.0M864.8 469.4L992.0 423.9M870.8 475.3L998.1 429.7M882.8 486.9L1010.1 441.5M888.8 492.8L1016.2 447.3M894.7 498.6L1022.2 453.2M900.7 504.5L1028.3 459.1M906.7 510.3L1034.3 464.9M912.7 516.1L1040.3 470.8M918.7 522.0L1046.4 476.7M924.6 527.8L1052.4 482.6M930.6 533.7L1058.5 488.4M942.6 545.3L1070.5 500.2M948.6 551.2L1076.6 506.0M954.5 557.0L1082.6 511.9M960.5 562.9L1088.7 517.8M966.5 568.7L1094.7 523.6M972.5 574.5L1100.7 529.5M978.5 580.4L1106.8 535.4M984.4 586.2L1112.8 541.3M990.4 592.1L1118.9 547.1M1002.4 603.7L1130.9 558.9M1008.4 609.6L1137.0 564.7M1014.3 615.4L1143.0 570.6M1020.3 621.3L1149.1 576.5M1026.3 627.1L1155.1 582.4M1032.3 632.9L1161.1 588.2M1038.3 638.8L1167.2 594.1M1044.2 644.6L1173.2 600.0M1050.2 650.5L1179.3 605.8M1062.2 662.1L1191.3 617.6M1068.2 668.0L1197.4 623.4M1074.1 673.8L1203.4 629.3M1080.1 679.7L1209.5 635.2M1086.1 685.5L1215.5 641.0M1092.1 691.3L1221.5 646.9M1098.1 697.2L1227.6 652.8M1104.0 703.0L1233.6 658.7M1110.0 708.9L1239.7 664.5M1122.0 720.5L1251.7 676.3M1128.0 726.4L1257.8 682.1M1133.9 732.2L1263.8 688.0M1139.9 738.1L1269.9 693.9M1145.9 743.9L1275.9 699.8M1151.9 749.7L1281.9 705.6M1157.9 755.6L1288.0 711.5M1163.8 761.4L1294.0 717.4M1169.8 767.3L1300.1 723.2M1181.8 778.9L1312.1 735.0M1187.8 784.8L1318.2 740.8M1193.7 790.6L1324.2 746.7M1199.7 796.5L1330.3 752.6M1205.7 802.3L1336.3 758.5M1211.7 808.1L1342.3 764.3M1217.7 814.0L1348.4 770.2M1223.6 819.8L1354.4 776.1M1229.6 825.7L1360.5 781.9" fill="none" stroke="#5050a0" stroke-opacity="0.22" stroke-width="1"/><path d="M579.9 107.0L1301.0 809.6M577.8 189.1L702.1 142.1M637.6 247.5L762.5 200.8M697.4 305.9L822.9 259.5M757.2 364.3L883.3 318.2M817.0 422.7L943.7 376.9M876.8 481.1L1004.1 435.6M936.6 539.5L1064.5 494.3M996.4 597.9L1124.9 553.0M1056.2 656.3L1185.3 611.7M1116.0 714.7L1245.7 670.4M1175.8 773.1L1306.1 729.1M1235.6 831.5L1366.5 787.8" fill="none" stroke="#5050a0" stroke-opacity="0.3" stroke-width="1.1"/>
</g></g>
<polygon points="637.1,290.4 621.8,327.5 616.8,381.7 632.1,346.1" fill="url(#yside)" stroke="#0a0a0a" stroke-width="1.5" stroke-linejoin="round"/>
<polygon points="572.1,276.6 637.1,290.4 621.8,327.5 557.9,315.1" fill="#a6a60e" stroke="#0a0a0a" stroke-width="1.5" stroke-linejoin="round"/>
<polygon points="557.9,315.1 621.8,327.5 616.8,381.7 552.0,368.6" fill="#dada0e" stroke="#0a0a0a" stroke-width="1.5" stroke-linejoin="round"/>
<path d="M329.8 339.3L565.4 291.8M329.8 339.3L380.2 320.2M391.5 315.7L541.1 341.8" stroke="#050505" stroke-width="1.7" stroke-linecap="round" fill="none"/>
<path d="M911.1 400 L895.4 479.1 A16.8 5.2 12.5 0 0 928.1 486.4 L943.3 406 A16.5 1.9 10.5 0 0 911.1 400Z" fill="url(#cyl)" stroke="#1c0202" stroke-width="1.3" stroke-linejoin="round"/>
<ellipse cx="927.2" cy="403" rx="16.3" ry="1.8" transform="rotate(10.5 927.2 403)" fill="#2e2a2a" stroke="#1a1a1a" stroke-width="0.8"/>
<path d="M1143.3 600.5L1146 586.5" stroke="#2a2ab4" stroke-width="1.7" fill="none"/><path d="M1146.7 582l-2.900 5.500 3.900 0.700z" fill="#2a2ab4"/>
<path d="M1143.3 601L1157 604.200" stroke="#b83030" stroke-width="1.700" fill="none"/><path d="M1162.300 605.300l-6.300-3.700-0.900 4.100z" fill="#b83030"/>
<circle cx="1144.800" cy="600" r="1" fill="#30b030"/>
<g font-family="Liberation Sans,DejaVu Sans,sans-serif" font-size="8.500" fill="#0c0c0c"><text x="1149" y="582.500">Z</text><text x="1147" y="600.800">Y</text><text x="1163.800" y="605.600">X</text></g>
</svg></div>
<!-- SNAP TOOLBAR -->
<div class="sbtn on" style="top:87px"></div>
<div class="sbtn" style="top:111px"></div>
<div class="sbtn" style="top:135px"></div>
<div class="sbtn on" style="top:159px"></div>
<div class="sbtn" style="top:183px"></div>
<div class="sbtn" style="top:207px"></div>
<div class="sbtn" style="top:231px"></div>
<div class="sbtn" style="top:255px"></div>
<div class="sbtn on" style="top:279px"></div>
<div class="sbtn" style="top:303px"></div>
<div class="sbtn" style="top:327px"></div>
<div class="sbtn" style="top:351px"></div>
<div class="sbtn" style="top:375px"></div>
<div class="sbtn" style="top:399px"></div>
<div class="abs" style="left:1198px;top:75px;width:1px;height:584px;background:#dcdad6;"></div>
<svg width="30" height="360" style="left:1170px;top:75px" viewBox="1170 75 30 360">
<defs><linearGradient id="gsn" x1="0" y1="0" x2="0" y2="1"><stop offset="0" stop-color="#10a47e"/><stop offset="1" stop-color="#087a5c"/></linearGradient></defs>
<path d="M1180.500 79v4M1183.500 79v4M1186.500 79v4" stroke="#c6c3be" stroke-width="1"/>
<g transform="translate(1184 98) scale(0.9) translate(-1184 -98)"><path d="M1180.5 97v-3.200a3.500 3.700 0 0 1 7 0v3.200" fill="none" stroke="#0a7a5c" stroke-width="2.200"/><rect x="1179" y="97" width="10" height="8" rx="0.8" fill="url(#gsn)" stroke="#04503c" stroke-width="0.9" stroke-linejoin="round"/><path d="M1179.5 99.5h9M1179.5 102h9" stroke="#7ad8bc" stroke-width="0.8"/></g>
<g transform="translate(1184 122) scale(0.9) translate(-1184 -122)"><path d="M1177.5 127l13-10" stroke="#04503c" stroke-width="4" stroke-linecap="butt"/><path d="M1177.5 127l13-10" stroke="#10a880" stroke-width="2.400"/><ellipse cx="1184" cy="122" rx="4.600" ry="3.800" transform="rotate(-38 1184 122)" fill="url(#gsn)" stroke="#04503c" stroke-width="0.9" stroke-linejoin="round"/></g>
<g transform="translate(1184 146) scale(0.9) translate(-1184 -146)"><path d="M1182.7 139h2.600v10h5.700v3h-14v-3h5.700z" fill="url(#gsn)" stroke="#04503c" stroke-width="0.9" stroke-linejoin="round"/></g>
<g transform="translate(1184 170) scale(0.9) translate(-1184 -170)"><path d="M1179.5 163h3v2.500h3v-2.500h3v2.500h2.500v3h-2.500v3h2.500v3h-2.500v2.500h-3v-2.500h-3v2.500h-3v-2.500h-2.500v-3h2.500v-3h-2.500v-3h2.500zM1182.5 168.5v3h3v-3z" fill-rule="evenodd" fill="url(#gsn)" stroke="#04503c" stroke-width="0.9" stroke-linejoin="round"/></g>
<g transform="translate(1184 194) scale(0.9) translate(-1184 -194)"><path d="M1177.5 189.5l2.300-2.300 4.200 4.200 4.200-4.200 2.300 2.300-4.200 4.200 4.200 4.200-2.300 2.300-4.200-4.200-4.200 4.200-2.300-2.300 4.200-4.200z" fill="url(#gsn)" stroke="#04503c" stroke-width="0.9" stroke-linejoin="round"/></g>
<g transform="translate(1184 218) scale(0.9) translate(-1184 -218)"><path d="M1177.5 215.5l1.500-2.500 11.500 6-1.500 2.500zM1177.5 220.5l1.500-2.500 11.500 6-1.500 2.500z" fill="url(#gsn)" stroke="#04503c" stroke-width="0.9" stroke-linejoin="round" transform="translate(0 -1.500)"/></g>
<g transform="translate(1184 242) scale(0.9) translate(-1184 -242)"><path d="M1180 245.5l10-8.500" stroke="#04503c" stroke-width="3.600" stroke-linecap="round"/><path d="M1180 245.5l10-8.500" stroke="#10a880" stroke-width="2" stroke-linecap="round"/><circle cx="1179.7" cy="245.8" r="3.200" fill="url(#gsn)" stroke="#04503c" stroke-width="0.9" stroke-linejoin="round"/></g>
<g transform="translate(1184 266) scale(0.9) translate(-1184 -266)"><path d="M1184 260.5l5.500 5.500-5.500 5.500-5.500-5.500z" fill="none" stroke="#04503c" stroke-width="3.200"/><path d="M1184 260.5l5.500 5.500-5.500 5.500-5.500-5.500z" fill="#f4f4f4" stroke="#10a880" stroke-width="1.600"/><circle cx="1184" cy="260.5" r="2.100" fill="url(#gsn)" stroke="#04503c" stroke-width="0.9" stroke-linejoin="round"/><circle cx="1189.5" cy="266" r="2.100" fill="url(#gsn)" stroke="#04503c" stroke-width="0.9" stroke-linejoin="round"/><circle cx="1184" cy="271.5" r="2.100" fill="url(#gsn)" stroke="#04503c" stroke-width="0.9" stroke-linejoin="round"/><circle cx="1178.5" cy="266" r="2.100" fill="url(#gsn)" stroke="#04503c" stroke-width="0.9" stroke-linejoin="round"/></g>
<g transform="translate(1184 290) scale(0.9) translate(-1184 -290)"><circle cx="1184" cy="290" r="6.200" fill="url(#gsn)" stroke="#04503c" stroke-width="0.9" stroke-linejoin="round"/><circle cx="1184" cy="290" r="3.300" fill="#bfe8da" stroke="#04503c" stroke-width="0.9"/><circle cx="1184" cy="290" r="1.200" fill="#0a8a68"/></g>
<g transform="translate(1184 314) scale(0.9) translate(-1184 -314)"><circle cx="1179.5" cy="314" r="2" fill="url(#gsn)" stroke="#04503c" stroke-width="0.9" stroke-linejoin="round"/><circle cx="1184" cy="314" r="2" fill="url(#gsn)" stroke="#04503c" stroke-width="0.9" stroke-linejoin="round"/><circle cx="1188.5" cy="314" r="2" fill="url(#gsn)" stroke="#04503c" stroke-width="0.9" stroke-linejoin="round"/></g>
<g transform="translate(1184 338) scale(0.9) translate(-1184 -338)"><path d="M1177.5 336l1.300-2.300 11.700 7-1.300 2.300z" fill="url(#gsn)" stroke="#04503c" stroke-width="0.9" stroke-linejoin="round"/><circle cx="1187.5" cy="334" r="2.100" fill="url(#gsn)" stroke="#04503c" stroke-width="0.9" stroke-linejoin="round"/></g>
<g transform="translate(1184 362) scale(0.9) translate(-1184 -362)"><path d="M1182.6 356h2.800v4.600h4.600v2.800h-4.600v4.600h-2.800v-4.600h-4.600v-2.800h4.600z" fill="url(#gsn)" stroke="#04503c" stroke-width="0.9" stroke-linejoin="round"/></g>
<g transform="translate(1184 386) scale(0.9) translate(-1184 -386)"><path d="M1180 392v-7h2v5h3M1178 385h2M1178 389h2" stroke="#04503c" stroke-width="1.400" fill="none"/><path d="M1183 380v3M1185.5 380v3M1188 380v3M1182 383h7v4" stroke="#0a8a68" stroke-width="1.200" fill="none"/></g>
<g transform="translate(1184 410) scale(0.9) translate(-1184 -410)"><rect x="1177.5" y="404" width="13" height="12" rx="1" fill="url(#gsn)" stroke="#04503c" stroke-width="0.9" stroke-linejoin="round"/><circle cx="1181" cy="412.5" r="1.500" fill="none" stroke="#04503c" stroke-width="0.8"/></g>
</svg>
<!-- BOTTOM TAB -->
<div class="abs" style="left:247px;top:629px;width:180px;height:29px;background:linear-gradient(#f6f5f4,#fcfcfc);border:1px solid #c9c6c1;border-top:none;border-radius:0 0 4px 4px;box-sizing:border-box;"></div>
<svg width="180" height="29" style="left:247px;top:629px" viewBox="247 629 180 29">
<path d="M254 637.500h6.500v2.600h-3.700v2h2.700v2.400h-2.700v4.800h-2.800z" fill="#e03010" stroke="#a01c04" stroke-width="0.4"/>
<g transform="translate(262.600 645.400) scale(0.78)"><path d="M-1-5.200h2l0.400 1.500 1.200 0.500 1.400-0.800 1.400 1.400-0.800 1.400 0.500 1.200 1.500 0.400v2l-1.500 0.400-0.500 1.200 0.800 1.400-1.400 1.400-1.400-0.800-1.200 0.500-0.400 1.500h-2l-0.400-1.500-1.200-0.500-1.400 0.800-1.400-1.400 0.800-1.400-0.500-1.200-1.500-0.400v-2l1.500-0.400 0.500-1.200-0.800-1.400 1.400-1.400 1.400 0.800 1.200-0.500z" fill="#1a3cb0" stroke="#0c1c70" stroke-width="0.4"/><circle r="1.700" fill="#f4f4f4"/></g>
<path d="M406.300 640.300l9 9M415.300 640.300l-9 9" stroke="#585652" stroke-width="3.200"/>
</svg>
<div class="t" style="left:276px;top:637px;font-size:13.5px;">T13-ejemplo-ini : 1*</div>
<!-- STATUS -->
<div class="abs" style="left:0;top:659px;width:1198px;height:1px;background:#d9d6d1;"></div>
<div class="t" style="left:6px;top:665px;font-size:13.5px;" id="st1">Preselected: T13_ejemplo_ini.Shell_solid.Edge4 (-0.537475,-30.000000,0.000000)</div>
<div class="t" style="right:4px;top:665px;font-size:13.2px;" id="st2">109.88 x 65.84 mm</div>
<div class="abs" style="left:1198px;top:0;width:2px;height:687px;background:#0c0c0c;"></div>
</body>
</html>
